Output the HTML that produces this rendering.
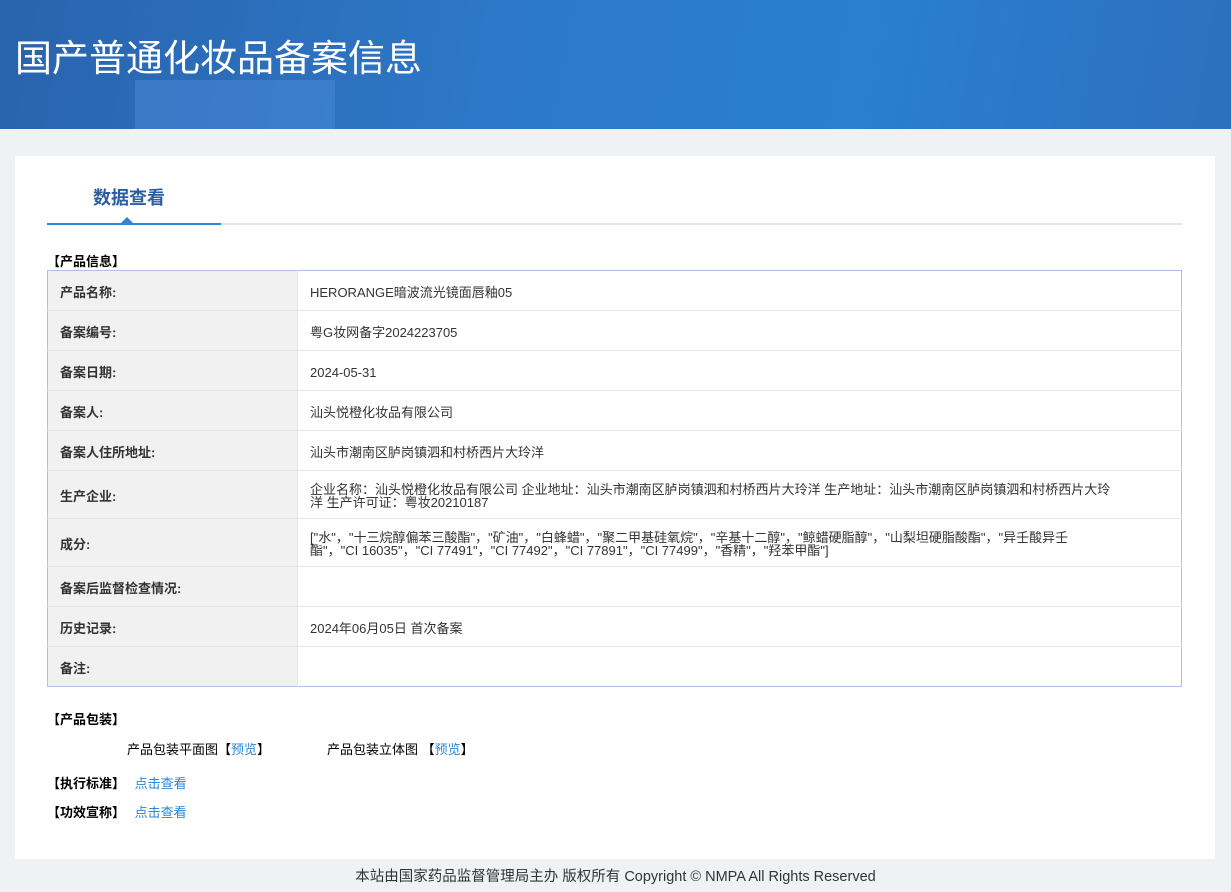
<!DOCTYPE html>
<html><head><meta charset="utf-8"><style>
*{margin:0;padding:0;box-sizing:border-box}
body{width:1231px;height:892px;background:#eff2f5;font-family:"Liberation Sans","Noto Sans CJK SC",sans-serif;font-size:13px;color:#333;position:relative;overflow:hidden}
.hd{position:absolute;left:0;top:0;width:1231px;height:129px;background:linear-gradient(100deg,#2a63ad 0%,#2d78c8 40%,#2a7fcf 70%,#2e6fbf 100%);overflow:hidden}
.hd h1{position:absolute;left:15px;top:28px;font-size:37px;font-weight:normal;color:#fff;letter-spacing:0px;font-family:"Noto Sans CJK SC",sans-serif}
.blk{position:absolute;left:135px;top:80px;width:200px;height:49px;background:rgba(90,150,230,.35)}
.card{position:absolute;left:15px;top:156px;width:1200px;height:703px;background:#fff}
.tab{position:absolute;left:78px;top:28px;font-size:18px;font-weight:bold;color:#2a5ea0}
.line{position:absolute;left:32px;top:67px;width:1135px;height:2px;background:#e4e4e4}
.line2{position:absolute;left:32px;top:67px;width:174px;height:2px;background:#2f86d6}
.tri{position:absolute;left:106px;top:61px;width:0;height:0;border-left:6px solid transparent;border-right:6px solid transparent;border-bottom:6px solid #2f86d6}
.sec{position:absolute;font-weight:bold;color:#000;font-size:13px}
table{position:absolute;left:32px;top:114px;width:1135px;border-collapse:collapse;border:1px solid #a9c4e6}
td{border-bottom:1px solid #e6e6e6;height:40px;padding:3px 12px 0;font-size:13px;line-height:13px}
td.l{width:250px;background:#f1f1f1;font-weight:bold;color:#333;border-right:1px solid #e6e6e6}
td.v{color:#333}
a{color:#2a86d6;text-decoration:none}
.ft{position:absolute;left:0;top:865px;width:1231px;text-align:center;font-size:14.5px;color:#333}
</style></head><body>
<div class="hd"><div class="blk"></div><h1>国产普通化妆品备案信息</h1></div>
<div class="card">
<div class="tab">数据查看</div>
<div class="line"></div><div class="line2"></div><div class="tri"></div>
<div class="sec" style="left:32px;top:95px">【产品信息】</div>
<table>
<tr><td class="l">产品名称:</td><td class="v">HERORANGE暗波流光镜面唇釉05</td></tr>
<tr><td class="l">备案编号:</td><td class="v">粤G妆网备字2024223705</td></tr>
<tr><td class="l">备案日期:</td><td class="v">2024-05-31</td></tr>
<tr><td class="l">备案人:</td><td class="v">汕头悦橙化妆品有限公司</td></tr>
<tr><td class="l">备案人住所地址:</td><td class="v">汕头市潮南区胪岗镇泗和村桥西片大玲洋</td></tr>
<tr><td class="l" style="height:48px">生产企业:</td><td class="v" style="padding-right:65px">企业名称：汕头悦橙化妆品有限公司 企业地址：汕头市潮南区胪岗镇泗和村桥西片大玲洋 生产地址：汕头市潮南区胪岗镇泗和村桥西片大玲洋 生产许可证：粤妆20210187</td></tr>
<tr><td class="l" style="height:48px">成分:</td><td class="v" style="padding-right:65px">["水"，"十三烷醇偏苯三酸酯"，"矿油"，"白蜂蜡"，"聚二甲基硅氧烷"，"辛基十二醇"，"鲸蜡硬脂醇"，"山梨坦硬脂酸酯"，"异壬酸异壬酯"，"CI 16035"，"CI 77491"，"CI 77492"，"CI 77891"，"CI 77499"，"香精"，"羟苯甲酯"]</td></tr>
<tr><td class="l">备案后监督检查情况:</td><td class="v"></td></tr>
<tr><td class="l">历史记录:</td><td class="v">2024年06月05日 首次备案</td></tr>
<tr><td class="l" style="border-bottom:none">备注:</td><td class="v" style="border-bottom:none"></td></tr>
</table>
<div class="sec" style="left:32px;top:553px">【产品包装】</div>
<div style="position:absolute;left:112px;top:583px;color:#000">产品包装平面图【<a>预览</a>】</div>
<div style="position:absolute;left:312px;top:583px;color:#000">产品包装立体图 【<a>预览</a>】</div>
<div class="sec" style="left:32px;top:617px">【执行标准】 <a style="font-weight:normal;margin-left:6px">点击查看</a></div>
<div class="sec" style="left:32px;top:646px">【功效宣称】 <a style="font-weight:normal;margin-left:6px">点击查看</a></div>
</div>
<div class="ft">本站由国家药品监督管理局主办 版权所有 Copyright © NMPA All Rights Reserved</div>
</body></html>
